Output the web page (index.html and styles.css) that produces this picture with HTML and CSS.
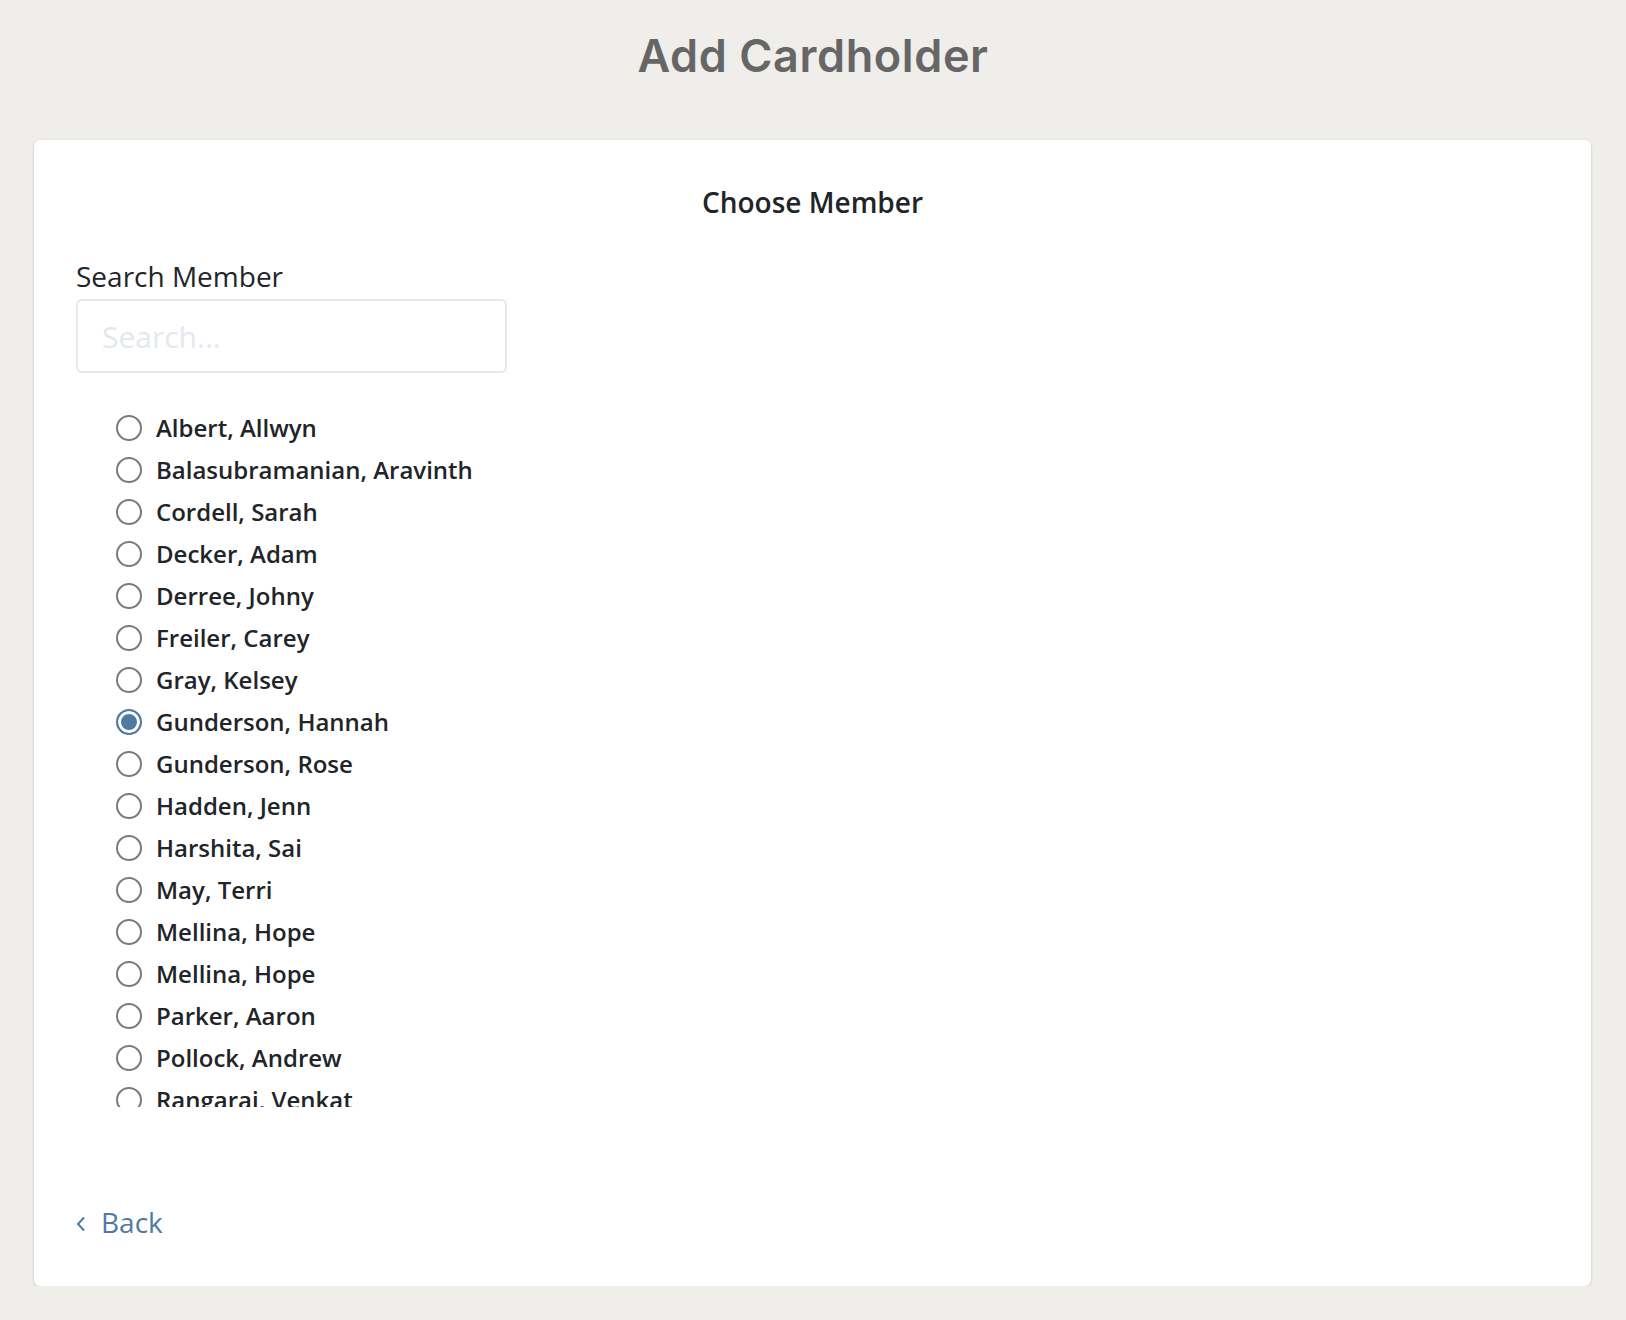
FILE: index.html
```html
<!DOCTYPE html>
<html lang="en">
<head>
    <meta charset="UTF-8">
    <meta name="viewport" content="width=device-width, initial-scale=1.0">
    <title>Add Cardholder</title>
    <link rel="stylesheet" href="styles.css">
</head>
<body>
    <header class="page-header">
        <h1>Add Cardholder</h1>
    </header>

    <main class="card">
        <h2 class="card-title">Choose Member</h2>

        <!-- Search -->
        <label class="field-label" for="memberSearch">Search Member</label>
        <input class="search-input" id="memberSearch" type="text" placeholder="Search...">

        <!-- Member list -->
        <ul class="member-list">
            <li><label class="member"><input type="radio" name="member"><span>Albert, Allwyn</span></label></li>
            <li><label class="member"><input type="radio" name="member"><span>Balasubramanian, Aravinth</span></label></li>
            <li><label class="member"><input type="radio" name="member"><span>Cordell, Sarah</span></label></li>
            <li><label class="member"><input type="radio" name="member"><span>Decker, Adam</span></label></li>
            <li><label class="member"><input type="radio" name="member"><span>Derree, Johny</span></label></li>
            <li><label class="member"><input type="radio" name="member"><span>Freiler, Carey</span></label></li>
            <li><label class="member"><input type="radio" name="member"><span>Gray, Kelsey</span></label></li>
            <li><label class="member"><input type="radio" name="member" checked><span>Gunderson, Hannah</span></label></li>
            <li><label class="member"><input type="radio" name="member"><span>Gunderson, Rose</span></label></li>
            <li><label class="member"><input type="radio" name="member"><span>Hadden, Jenn</span></label></li>
            <li><label class="member"><input type="radio" name="member"><span>Harshita, Sai</span></label></li>
            <li><label class="member"><input type="radio" name="member"><span>May, Terri</span></label></li>
            <li><label class="member"><input type="radio" name="member"><span>Mellina, Hope</span></label></li>
            <li><label class="member"><input type="radio" name="member"><span>Mellina, Hope</span></label></li>
            <li><label class="member"><input type="radio" name="member"><span>Parker, Aaron</span></label></li>
            <li><label class="member"><input type="radio" name="member"><span>Pollock, Andrew</span></label></li>
            <li><label class="member"><input type="radio" name="member"><span>Rangarai, Venkat</span></label></li>
        </ul>

        <a class="back-link" href="#">
            <svg width="10" height="16" viewBox="0 0 10 16" aria-hidden="true">
                <path d="M8 1.5 L2 8 L8 14.5" fill="none" stroke="currentColor" stroke-width="2"/>
            </svg>
            Back
        </a>
    </main>
</body>
</html>
```

FILE: styles.css
```css
body {
    font-family: 'Open Sans', sans-serif;
    background-color: #efeeea;
    color: #212529;
    margin: 0;
}

/* Page header */
.page-header {
    padding: 29px 0 57px;
    text-align: center;
}

.page-header h1 {
    margin: 0;
    font-family: 'Inter', sans-serif;
    font-size: 45px;
    font-weight: 600;
    line-height: 54px;
    letter-spacing: 0.6px;
    color: #666;
}

/* Card */
.card {
    margin: 0 35px 0 34px;
    padding: 44px 42px 45px;
    background-color: white;
    border-radius: 6px;
    box-shadow: 0 1px 3px rgba(0, 0, 0, 0.18);
}

.card-title {
    margin: 0 0 36px;
    font-size: 28px;
    font-weight: 600;
    line-height: 37px;
    text-align: center;
}

.field-label {
    display: block;
    font-size: 28px;
    line-height: 38px;
    margin-bottom: 4px;
}

.search-input {
    box-sizing: border-box;
    display: block;
    width: 431px;
    height: 74px;
    padding: 0 24px;
    border: 2px solid #e3e8ee;
    border-radius: 6px;
    font-family: 'Open Sans', sans-serif;
    font-size: 30px;
    color: #212529;
    outline: none;
}

.search-input::placeholder {
    color: #e3e8f0;
}

/* Member list */
.member-list {
    list-style: none;
    margin: 34px 0 0;
    padding: 0 0 0 40px;
    height: 700px;
    overflow-y: auto;
    scrollbar-width: none;
}

.member {
    display: flex;
    align-items: center;
    gap: 14px;
    height: 42px;
    font-size: 24px;
    font-weight: 600;
    line-height: 42px;
    cursor: pointer;
}

.member input {
    appearance: none;
    box-sizing: border-box;
    width: 26px;
    height: 26px;
    margin: 0;
    border: 2px solid #7a7a7a;
    border-radius: 50%;
    background-color: white;
    flex-shrink: 0;
}

.member input:checked {
    border-color: #4f7aa5;
    background-color: #4f7aa5;
    box-shadow: inset 0 0 0 3px white;
}

/* Back link */
.back-link {
    display: inline-flex;
    align-items: center;
    gap: 15px;
    margin-top: 96px;
    font-size: 28px;
    line-height: 38px;
    color: #4f7aa5;
    text-decoration: none;
}

.back-link svg {
    margin-top: 3px;
}
```
